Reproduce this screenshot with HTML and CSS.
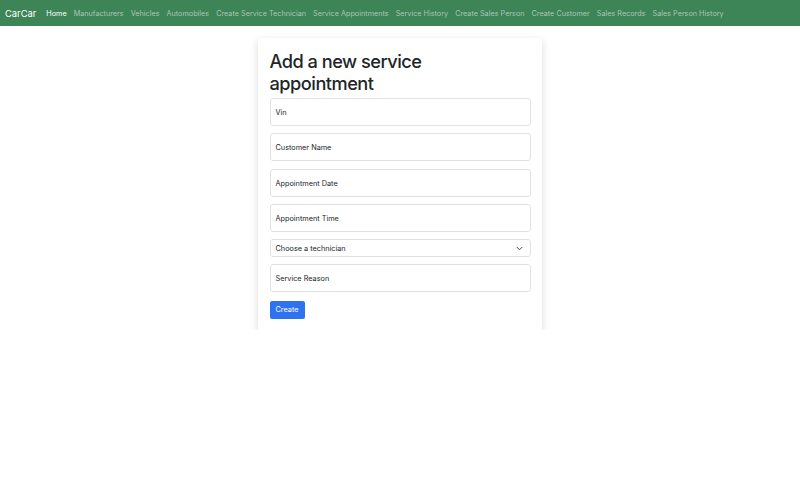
FILE: index.html
```html
<!DOCTYPE html>
<html>
<head>
<meta charset="utf-8">
<link rel="stylesheet" href="styles.css">
</head>
<body>
<nav class="navbar">
  <span class="brand">CarCar</span>
  <ul class="nav">
    <li class="active">Home</li>
    <li>Manufacturers</li>
    <li>Vehicles</li>
    <li>Automobiles</li>
    <li>Create Service Technician</li>
    <li>Service Appointments</li>
    <li>Service History</li>
    <li>Create Sales Person</li>
    <li>Create Customer</li>
    <li>Sales Records</li>
    <li>Sales Person History</li>
  </ul>
</nav>
<main class="main">
  <div class="card">
    <h1 class="title">Add a new service appointment</h1>
    <form class="form">
      <div class="field">Vin</div>
      <div class="field">Customer Name</div>
      <div class="field">Appointment Date</div>
      <div class="field">Appointment Time</div>
      <div class="select">
        <span>Choose a technician</span>
        <svg class="chev" width="7" height="5" viewBox="0 0 16 12"><path d="M2 3l6 6 6-6" fill="none" stroke="#343a40" stroke-width="2.2" stroke-linecap="round" stroke-linejoin="round"/></svg>
      </div>
      <div class="field">Service Reason</div>
      <div class="actions"><button type="button" class="btn">Create</button></div>
    </form>
  </div>
</main>
</body>
</html>
```
FILE: styles.css
```css
* { box-sizing: border-box; }
body {
  margin: 0;
  font-family: Inter, "Liberation Sans", sans-serif;
  color: #212529;
  background: #fff;
}
.navbar {
  height: 26px;
  background: #3d8456;
  display: flex;
  align-items: center;
  padding: 0 5px;
  white-space: nowrap;
}
.brand {
  color: #fff;
  font-size: 9.4px;
  margin-right: 10px;
}
.nav {
  display: flex;
  list-style: none;
  margin: 0;
  padding: 0;
  gap: 7px;
  font-size: 7.25px;
  color: rgba(255,255,255,0.55);
}
.nav .active { color: #fff; }
.main {
  display: flex;
  justify-content: center;
  padding-top: 12px;
}
.card {
  width: 284px;
  margin-left: -1px;
  padding: 12px 11px 11px 12px;
  background: #fff;
  box-shadow: 0 3px 8px rgba(0,0,0,0.15);
  border-radius: 2px;
}
.title {
  margin: 0 0 4px;
  max-width: 240px;
  font-size: 18.2px;
  font-weight: 500;
  line-height: 22px;
  letter-spacing: -0.5px;
}
.form {
  display: flex;
  flex-direction: column;
  gap: 7.3px;
}
.field {
  height: 28px;
  border: 1px solid #dee2e6;
  border-radius: 3px;
  font-size: 7.3px;
  padding: 1px 5px 0;
  display: flex;
  align-items: center;
}
.select {
  height: 18px;
  border: 1px solid #dee2e6;
  border-radius: 3px;
  font-size: 7.3px;
  padding: 0 7px 0 5px;
  display: flex;
  align-items: center;
  justify-content: space-between;
}
.actions { display: flex; padding-top: 1px; }
.btn {
  background: #2f72ef;
  color: #fff;
  border: none;
  border-radius: 2px;
  font-family: inherit;
  font-size: 7.3px;
  height: 18px;
  width: 35px;
  padding: 0;
}
```
